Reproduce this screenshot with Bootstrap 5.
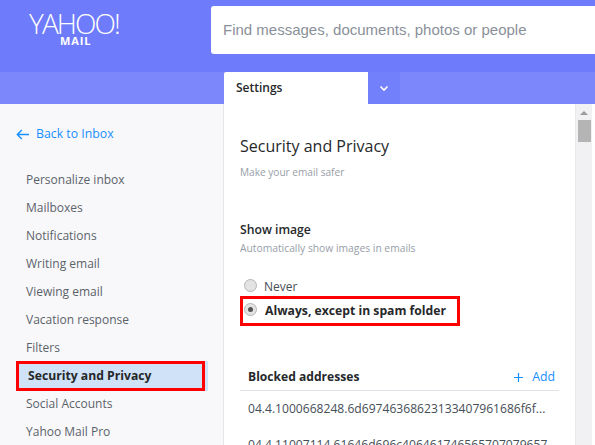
<!DOCTYPE html>
<html lang="en"><head><meta charset="utf-8"><title>Yahoo Mail Settings</title>
<link rel="stylesheet" href="https://cdn.jsdelivr.net/npm/bootstrap@5.3.0/dist/css/bootstrap.min.css">
<style>
html,body{height:445px;overflow:hidden;}
body{font-family:"Open Sans",sans-serif;background:#fff;color:#26282a;}
.shell{width:595px;height:445px;overflow:hidden;}
.top-bar{height:72px;background:#6e7cfb;}
.logo-box{width:211px;color:#fff;line-height:1;padding-top:10px;}
.logo-word{font-weight:300;font-size:28px;letter-spacing:-1.9px;line-height:26px;padding-left:29px;}
.logo-sub{font-size:11px;font-weight:700;letter-spacing:.9px;padding-left:60px;line-height:9px;}
.search-box{width:384px;height:48px;margin-top:6px;background:#fff;border-radius:3px 0 0 3px;font-family:"Liberation Sans",sans-serif;font-size:15px;color:#8a9099;padding:0 0 0 12px;}
.tab-bar{height:32px;background:#7b87fb;}
.tab-spacer{width:224px;}
.tab-active{width:144px;background:#fff;font-size:12px;font-weight:600;padding:0 12px;border-radius:2px 0 0 0;}
.tab-more{width:32px;background:#7380fb;}
.body-area{height:341px;}
.side-col{width:224px;background:#f8f8fa;border-right:1px solid #e6e6ea;padding:22px 0 0 16px;}
.back-link{color:#188fff;font-size:12.3px;height:17px;gap:7px;margin-bottom:23px;}
.side-item{font-size:12px;color:#5b636a;height:28px;padding-left:10px;}
.side-item.is-picked{width:189px;height:30px;margin:-1px 0;padding-left:9px;background:#cfe2f7;border:3px solid #f00;font-weight:700;color:#26282a;font-size:12.2px;box-shadow:3px 0 0 #cfe2f7;}
.main-col{width:351px;padding:0 0 0 16px;}
.page-title{font-size:16px;font-weight:400;margin:31px 0 0;line-height:22px;color:#26282a;}
.page-sub{font-size:10.1px;color:#979ea8;margin-top:8px;line-height:14px;}
.sect-title{font-size:12.2px;font-weight:600;margin-top:43px;line-height:16px;}
.sect-sub{font-size:10.3px;color:#979ea8;margin-top:3px;line-height:14px;}
.radio-line{font-size:12px;color:#464e56;height:19px;gap:7px;margin-top:22px;}
.radio-dot{width:13px;height:13px;border-radius:50%;border:1px solid #b5b5b5;background:#e3e3e3;flex:none;margin-top:-3px;}
.radio-on{display:flex;align-items:center;justify-content:center;}
.radio-on::after{content:"";width:5px;height:5px;border-radius:50%;background:#555;}
.radio-box{width:220px;height:30px;border:3px solid #f00;margin-top:0;padding-left:1px;font-weight:700;color:#26282a;gap:8px;font-size:12.2px;}
.block-head{margin:35px 16px 0 0;height:30px;border-bottom:1px solid #e0e4e9;padding:12px 4px 9px 8px;}
.block-title{font-size:12.1px;font-weight:700;}
.block-add{color:#188fff;font-size:12.3px;gap:9px;}
.addr{font-size:12.1px;color:#464e56;padding-left:8px;height:36px;padding-top:9px;white-space:nowrap;overflow:hidden;}
.scroll-rail{width:20px;background:#f1f1f3;border-left:1px solid #e9e9ec;border-right:3px solid #fff;}
.scroll-up{width:0;height:0;border:4px solid transparent;border-bottom:4px solid #9a9a9a;border-top:0;margin:7px auto 5px;}
.scroll-thumb{width:13px;height:22px;background:#b4b4b4;margin:0 auto;}
</style></head>
<body>
<div class="shell d-flex flex-column">
 <header class="top-bar d-flex">
  <div class="logo-box"><div class="logo-word">YAHOO!</div><div class="logo-sub">MAIL</div></div>
  <div class="search-box d-flex align-items-center">Find messages, documents, photos or people</div>
 </header>
 <nav class="tab-bar d-flex">
  <div class="tab-spacer"></div>
  <div class="tab-active d-flex align-items-center">Settings</div>
  <div class="tab-more d-flex align-items-center justify-content-center">
   <svg width="10" height="7" viewBox="0 0 10 7"><path d="M1.500 1.500 5 5l3.500-3.500" fill="none" stroke="#fff" stroke-width="1.600"/></svg>
  </div>
 </nav>
 <div class="body-area d-flex">
  <aside class="side-col">
   <div class="back-link d-flex align-items-center">
    <svg width="13" height="11" viewBox="0 0 13 11"><path d="M13 5.500H1.500M5.800 1 1.300 5.500 5.800 10" fill="none" stroke="#188fff" stroke-width="1.400"/></svg>
    <span>Back to Inbox</span>
   </div>
   <div class="side-item d-flex align-items-center">Personalize inbox</div>
   <div class="side-item d-flex align-items-center">Mailboxes</div>
   <div class="side-item d-flex align-items-center">Notifications</div>
   <div class="side-item d-flex align-items-center">Writing email</div>
   <div class="side-item d-flex align-items-center">Viewing email</div>
   <div class="side-item d-flex align-items-center">Vacation response</div>
   <div class="side-item d-flex align-items-center">Filters</div>
   <div class="side-item is-picked d-flex align-items-center">Security and Privacy</div>
   <div class="side-item d-flex align-items-center">Social Accounts</div>
   <div class="side-item d-flex align-items-center">Yahoo Mail Pro</div>
  </aside>
  <main class="main-col">
   <h1 class="page-title">Security and Privacy</h1>
   <div class="page-sub">Make your email safer</div>
   <div class="sect-title">Show image</div>
   <div class="sect-sub">Automatically show images in emails</div>
   <div class="radio-line d-flex align-items-center"><span class="radio-dot ms-1"></span><span>Never</span></div>
   <div class="radio-line radio-box d-flex align-items-center"><span class="radio-dot radio-on"></span><span>Always, except in spam folder</span></div>
   <div class="block-head d-flex justify-content-between align-items-center">
    <span class="block-title">Blocked addresses</span>
    <span class="block-add d-flex align-items-center">
     <svg width="9" height="9" viewBox="0 0 9 9"><path d="M4.500 0v9M0 4.500h9" stroke="#188fff" stroke-width="1.200" fill="none"/></svg>
     <span>Add</span></span>
   </div>
   <div class="addr">04.4.1000668248.6d69746368623133407961686f6f...</div>
   <div class="addr">04.4.11007114.61646d696c406461746565707079657</div>
  </main>
  <div class="scroll-rail"><div class="scroll-up"></div><div class="scroll-thumb"></div></div>
 </div>
</div>
</body></html>
